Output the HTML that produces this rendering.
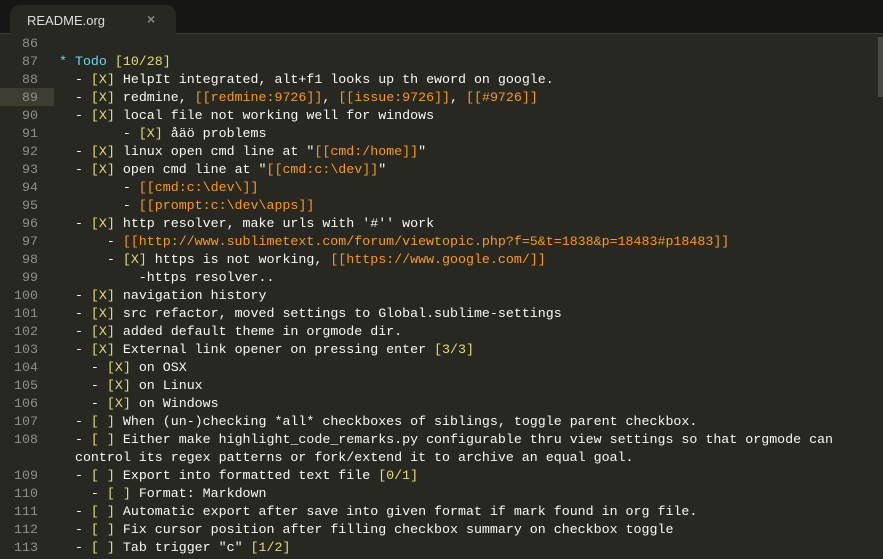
<!DOCTYPE html><html><head><style>
body{margin:0;width:883px;height:559px;background:#272822;overflow:hidden;font-family:"Liberation Mono",monospace;}
#tabbar{position:absolute;left:0;top:0;width:883px;height:33px;background:#161614;border-bottom:1px solid #3a3a36;}
#tab{position:absolute;left:10px;top:5px;width:166px;height:29px;background:#272822;border-radius:10px 10px 0 0;}
#tab span{position:absolute;left:17px;top:8px;font:13px "Liberation Sans",sans-serif;color:#ddd;}
#tab b{position:absolute;left:137px;top:6px;font:bold 14px "Liberation Sans",sans-serif;color:#888;}
.ln{position:absolute;left:0;width:38px;text-align:right;color:#8f908a;font-size:13.3px;line-height:18px;}
.l{position:absolute;left:59px;color:#f8f8f2;font-size:13.3px;line-height:18px;white-space:pre;}
.y{color:#e6db74}.o{color:#fd971f}.c{color:#66d9ef}
#hl{position:absolute;left:0;top:88px;width:54px;height:18px;background:#3e3d32;}
#mm{position:absolute;left:878px;top:37px;width:5px;height:60px;background:#4a4a44;}
</style></head><body>
<div id="tabbar"><div id="tab"><span>README.org</span><b>×</b></div></div>
<div id="hl"></div><div id="mm"></div>
<div class="ln" style="top:35px">86</div>
<div class="ln" style="top:53px">87</div><div class="l" style="top:53px"><span class="c">* Todo </span><span class="y">[10/28]</span></div>
<div class="ln" style="top:71px">88</div><div class="l" style="top:71px">  - <span class="y">[X]</span> HelpIt integrated, alt+f1 looks up th eword on google.</div>
<div class="ln" style="top:89px">89</div><div class="l" style="top:89px">  - <span class="y">[X]</span> redmine, <span class="o">[[redmine:9726]]</span>, <span class="o">[[issue:9726]]</span>, <span class="o">[[#9726]]</span></div>
<div class="ln" style="top:107px">90</div><div class="l" style="top:107px">  - <span class="y">[X]</span> local file not working well for windows</div>
<div class="ln" style="top:125px">91</div><div class="l" style="top:125px">        - <span class="y">[X]</span> åäö problems</div>
<div class="ln" style="top:143px">92</div><div class="l" style="top:143px">  - <span class="y">[X]</span> linux open cmd line at "<span class="o">[[cmd:/home]]</span>"</div>
<div class="ln" style="top:161px">93</div><div class="l" style="top:161px">  - <span class="y">[X]</span> open cmd line at "<span class="o">[[cmd:c:\dev]]</span>"</div>
<div class="ln" style="top:179px">94</div><div class="l" style="top:179px">        - <span class="o">[[cmd:c:\dev\]]</span></div>
<div class="ln" style="top:197px">95</div><div class="l" style="top:197px">        - <span class="o">[[prompt:c:\dev\apps]]</span></div>
<div class="ln" style="top:215px">96</div><div class="l" style="top:215px">  - <span class="y">[X]</span> http resolver, make urls with '#'' work</div>
<div class="ln" style="top:233px">97</div><div class="l" style="top:233px">      - <span class="o">[[http://www.sublimetext.com/forum/viewtopic.php?f=5&amp;t=1838&amp;p=18483#p18483]]</span></div>
<div class="ln" style="top:251px">98</div><div class="l" style="top:251px">      - <span class="y">[X]</span> https is not working, <span class="o">[[https://www.google.com/]]</span></div>
<div class="ln" style="top:269px">99</div><div class="l" style="top:269px">          -https resolver..</div>
<div class="ln" style="top:287px">100</div><div class="l" style="top:287px">  - <span class="y">[X]</span> navigation history</div>
<div class="ln" style="top:305px">101</div><div class="l" style="top:305px">  - <span class="y">[X]</span> src refactor, moved settings to Global.sublime-settings</div>
<div class="ln" style="top:323px">102</div><div class="l" style="top:323px">  - <span class="y">[X]</span> added default theme in orgmode dir.</div>
<div class="ln" style="top:341px">103</div><div class="l" style="top:341px">  - <span class="y">[X]</span> External link opener on pressing enter <span class="y">[3/3]</span></div>
<div class="ln" style="top:359px">104</div><div class="l" style="top:359px">    - <span class="y">[X]</span> on OSX</div>
<div class="ln" style="top:377px">105</div><div class="l" style="top:377px">    - <span class="y">[X]</span> on Linux</div>
<div class="ln" style="top:395px">106</div><div class="l" style="top:395px">    - <span class="y">[X]</span> on Windows</div>
<div class="ln" style="top:413px">107</div><div class="l" style="top:413px">  - <span class="y">[ ]</span> When (un-)checking *all* checkboxes of siblings, toggle parent checkbox.</div>
<div class="ln" style="top:431px">108</div><div class="l" style="top:431px">  - <span class="y">[ ]</span> Either make highlight_code_remarks.py configurable thru view settings so that orgmode can</div>
<div class="l" style="top:449px">  control its regex patterns or fork/extend it to archive an equal goal.</div>
<div class="ln" style="top:467px">109</div><div class="l" style="top:467px">  - <span class="y">[ ]</span> Export into formatted text file <span class="y">[0/1]</span></div>
<div class="ln" style="top:485px">110</div><div class="l" style="top:485px">    - <span class="y">[ ]</span> Format: Markdown</div>
<div class="ln" style="top:503px">111</div><div class="l" style="top:503px">  - <span class="y">[ ]</span> Automatic export after save into given format if mark found in org file.</div>
<div class="ln" style="top:521px">112</div><div class="l" style="top:521px">  - <span class="y">[ ]</span> Fix cursor position after filling checkbox summary on checkbox toggle</div>
<div class="ln" style="top:539px">113</div><div class="l" style="top:539px">  - <span class="y">[ ]</span> Tab trigger "c" <span class="y">[1/2]</span></div>
</body></html>
